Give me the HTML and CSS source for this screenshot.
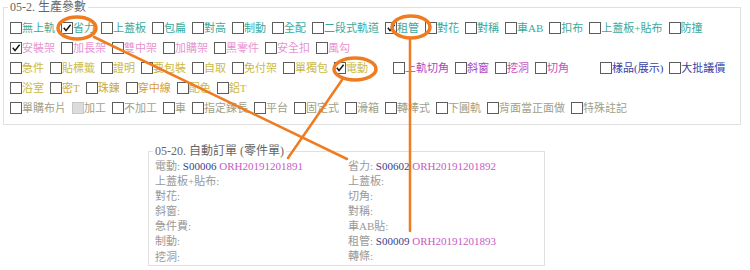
FILE: index.html
```html
<!DOCTYPE html>
<html lang="zh-Hant">
<head>
    <meta charset="UTF-8">
    <title>生產參數</title>
    <link rel="stylesheet" href="styles.css">
</head>
<body>
    <div class="page">
        <fieldset class="params">
            <legend>05-2. 生產參數</legend>
            <div class="row">
                <label class="opt teal"><span class="cb"></span>無上軌</label>
                <label class="opt teal"><span class="cb on"><svg viewBox="0 0 10 10"><path d="M1.8 4.8 L4 7.6 L8.6 1.8"/></svg></span>省力</label>
                <label class="opt teal"><span class="cb"></span>上蓋板</label>
                <label class="opt teal"><span class="cb"></span>包扁</label>
                <label class="opt teal"><span class="cb"></span>對高</label>
                <label class="opt teal"><span class="cb"></span>制動</label>
                <label class="opt teal"><span class="cb"></span>全配</label>
                <label class="opt teal"><span class="cb"></span>二段式軌道</label>
                <label class="opt teal"><span class="cb on"><svg viewBox="0 0 10 10"><path d="M1.8 4.8 L4 7.6 L8.6 1.8"/></svg></span>租管</label>
                <label class="opt teal"><span class="cb"></span>對花</label>
                <label class="opt teal"><span class="cb"></span>對稱</label>
                <label class="opt teal"><span class="cb"></span>車AB</label>
                <label class="opt teal"><span class="cb"></span>扣布</label>
                <label class="opt teal"><span class="cb"></span>上蓋板+貼布</label>
                <label class="opt teal"><span class="cb"></span>防撞</label>
            </div>
            <div class="row">
                <label class="opt pink"><span class="cb on"><svg viewBox="0 0 10 10"><path d="M1.8 4.8 L4 7.6 L8.6 1.8"/></svg></span>安裝架</label>
                <label class="opt pink"><span class="cb"></span>加長架</label>
                <label class="opt pink"><span class="cb"></span>雙中架</label>
                <label class="opt pink"><span class="cb"></span>加購架</label>
                <label class="opt pink"><span class="cb"></span>黑零件</label>
                <label class="opt pink"><span class="cb"></span>安全扣</label>
                <label class="opt pink"><span class="cb"></span>風勾</label>
            </div>
            <div class="row">
                <label class="opt gold"><span class="cb"></span>急件</label>
                <label class="opt gold"><span class="cb"></span>貼標籤</label>
                <label class="opt gold"><span class="cb"></span>證明</label>
                <label class="opt gold"><span class="cb"></span>要包裝</label>
                <label class="opt gold"><span class="cb"></span>自取</label>
                <label class="opt gold"><span class="cb"></span>免付架</label>
                <label class="opt gold"><span class="cb"></span>單獨包</label>
                <label class="opt gold"><span class="cb on"><svg viewBox="0 0 10 10"><path d="M1.8 4.8 L4 7.6 L8.6 1.8"/></svg></span>電動</label>
                <label class="opt purple group-cut"><span class="cb"></span>上軌切角</label>
                <label class="opt purple"><span class="cb"></span>斜窗</label>
                <label class="opt magenta"><span class="cb"></span>挖洞</label>
                <label class="opt magenta"><span class="cb"></span>切角</label>
                <label class="opt blue group-sample"><span class="cb"></span>樣品(展示)</label>
                <label class="opt blue"><span class="cb"></span>大批議價</label>
            </div>
            <div class="row">
                <label class="opt gold"><span class="cb"></span>浴室</label>
                <label class="opt amber"><span class="cb"></span>密T</label>
                <label class="opt ochre"><span class="cb"></span>珠鍊</label>
                <label class="opt orange"><span class="cb"></span>穿中線</label>
                <label class="opt gold"><span class="cb"></span>配色</label>
                <label class="opt gold"><span class="cb"></span>鋁T</label>
            </div>
            <div class="row">
                <label class="opt olive"><span class="cb"></span>單購布片</label>
                <label class="opt olive"><span class="cb off"></span>加工</label>
                <label class="opt olive"><span class="cb"></span>不加工</label>
                <label class="opt olive"><span class="cb"></span>車</label>
                <label class="opt olive"><span class="cb"></span>指定鍊長</label>
                <label class="opt olive"><span class="cb"></span>平台</label>
                <label class="opt olive"><span class="cb"></span>固定式</label>
                <label class="opt olive"><span class="cb"></span>滑箱</label>
                <label class="opt olive"><span class="cb"></span>轉棒式</label>
                <label class="opt olive"><span class="cb"></span>下圓軌</label>
                <label class="opt olive"><span class="cb"></span>背面當正面做</label>
                <label class="opt olive"><span class="cb"></span>特殊註記</label>
            </div>
        </fieldset>

        <fieldset class="auto-order">
            <legend>05-20. 自動訂單 (零件單)</legend>
            <div class="order-grid">
                <div class="line">電動: <span class="sku">S00006</span> <span class="ord">ORH20191201891</span></div>
                <div class="line">省力: <span class="sku">S00602</span> <span class="ord">ORH20191201892</span></div>
                <div class="line">上蓋板+貼布:</div>
                <div class="line">上蓋板:</div>
                <div class="line">對花:</div>
                <div class="line">切角:</div>
                <div class="line">斜窗:</div>
                <div class="line">對稱:</div>
                <div class="line">急件費:</div>
                <div class="line">車AB貼:</div>
                <div class="line">制動:</div>
                <div class="line">租管: <span class="sku">S00009</span> <span class="ord">ORH20191201893</span></div>
                <div class="line last">挖洞:</div>
                <div class="line">轉條:</div>
            </div>
        </fieldset>

        <!-- hand-drawn annotation marks -->
        <svg class="marks" width="750" height="270" viewBox="0 0 750 270">
            <ellipse cx="77" cy="28" rx="19" ry="11"/>
            <ellipse cx="411" cy="27" rx="19" ry="11"/>
            <ellipse cx="355" cy="69" rx="21" ry="11"/>
            <line x1="94" y1="37" x2="347" y2="159"/>
            <line x1="410" y1="38" x2="410" y2="231"/>
            <line x1="342" y1="80" x2="288" y2="158"/>
        </svg>
    </div>
</body>
</html>
```

FILE: styles.css
```css
body {
    margin: 0;
    background: #fff;
    font-family: 'Liberation Serif', 'Noto Sans CJK TC', serif;
}
.page {
    position: relative;
    width: 750px;
    height: 270px;
    overflow: hidden;
}
fieldset {
    box-sizing: border-box;
    border: 1px solid #e0e0e0;
    min-width: 0;
}
legend {
    font-size: 12px;
    line-height: 14px;
    color: #666;
    padding: 0 2px;
    margin-left: -2px;
}
.params {
    width: 738px;
    margin: 0 0 0 3px;
    padding: 4px 6px 6px;
}
.row {
    display: flex;
    gap: 6px;
    height: 20px;
    align-items: center;
}
.opt {
    display: flex;
    align-items: center;
    font-size: 11px;
    line-height: 14px;
    white-space: nowrap;
}
.cb {
    display: inline-block;
    width: 10px;
    height: 10px;
    border: 1px solid #5c5c5c;
    background: #fff;
    margin-top: -1px;
}
.cb svg {
    display: block;
    width: 10px;
    height: 10px;
}
.cb svg path {
    fill: none;
    stroke: #111;
    stroke-width: 1.5;
}
.cb.off {
    background: #dcdcdc;
    border-color: #c8c8c8;
}
.group-cut {
    margin-left: 19px;
}
.group-sample {
    margin-left: 25px;
}
.teal { color: #3aaa9c; }
.pink { color: #e893d2; }
.gold { color: #cbba46; }
.amber { color: #d4a843; }
.ochre { color: #c6a845; }
.orange { color: #d99c36; }
.purple { color: #ab46c8; }
.magenta { color: #c850bd; }
.blue { color: #3642a4; }
.olive { color: #a2a086; }

.auto-order {
    width: 397px;
    margin: 19px 0 0 148px;
    padding: 1px 6px 0;
}
.order-grid {
    display: grid;
    grid-template-columns: 193px auto;
}
.line {
    height: 15px;
    line-height: 15px;
    font-size: 11px;
    color: #999;
    white-space: nowrap;
}
.line.last {
    margin-top: 1px;
}
.sku { color: #383c88; }
.ord { color: #c75ac4; }

.marks {
    position: absolute;
    left: 0;
    top: 0;
    pointer-events: none;
}
.marks ellipse,
.marks line {
    fill: none;
    stroke: #f07c22;
    stroke-linecap: round;
}
.marks ellipse {
    stroke-width: 3.5;
}
.marks line {
    stroke-width: 2.5;
}
```
